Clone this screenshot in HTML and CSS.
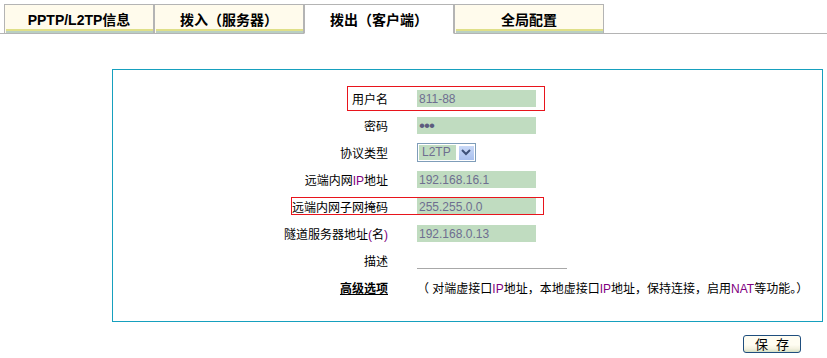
FILE: index.html
```html
<!DOCTYPE html>
<html lang="zh-CN">
<head>
    <meta charset="UTF-8">
    <meta name="viewport" content="width=device-width, initial-scale=1.0">
    <title>拨出（客户端）</title>
    <link rel="stylesheet" href="styles.css">
</head>
<body>

    <div class="tabs">
        <a class="tab">PPTP/L2TP信息</a>
        <a class="tab">拨入（服务器）</a>
        <a class="tab active">拨出（客户端）</a>
        <a class="tab">全局配置</a>
    </div>

    <div class="content">
        <form class="panel" onsubmit="return false">
            <div class="row">
                <label class="label" for="user">用户名</label>
                <input class="field" type="text" id="user" value="811-88">
                <span class="mark mark-user"></span>
            </div>
            <div class="row">
                <label class="label" for="pass">密码</label>
                <input class="field field-pass" type="password" id="pass" value="abc">
            </div>
            <div class="row">
                <span class="label">协议类型</span>
                <div class="select">
                    <span class="select-value">L2TP</span>
                    <span class="select-btn">
                        <svg width="16" height="15" viewBox="0 0 16 15">
                            <polyline points="4,5 8,9 12,5" fill="none" stroke="#3d5178" stroke-width="2"/>
                        </svg>
                    </span>
                </div>
            </div>
            <div class="row">
                <label class="label" for="remote-ip">远端内网<span class="en">IP</span>地址</label>
                <input class="field" type="text" id="remote-ip" value="192.168.16.1">
            </div>
            <div class="row">
                <label class="label" for="remote-mask">远端内网子网掩码</label>
                <input class="field" type="text" id="remote-mask" value="255.255.0.0">
                <span class="mark mark-mask"></span>
            </div>
            <div class="row">
                <label class="label" for="server">隧道服务器地址<span class="en">(</span>名<span class="en">)</span></label>
                <input class="field" type="text" id="server" value="192.168.0.13">
            </div>
            <div class="row">
                <label class="label" for="desc">描述</label>
                <input class="field field-line" type="text" id="desc">
            </div>
            <div class="row">
                <a class="label adv-label">高级选项</a>
                <span class="adv-note">（ 对端虚接口<span class="en">IP</span>地址，本地虚接口<span class="en">IP</span>地址，保持连接，启用<span class="en">NAT</span>等功能。）</span>
            </div>
        </form>

        <div class="actions">
            <button class="save" type="button">保 存</button>
        </div>
    </div>

</body>
</html>
```

FILE: styles.css
```css
body {
    margin: 0;
    font-family: "Liberation Sans", "Noto Sans CJK SC", sans-serif;
    font-size: 12px;
    color: #000;
    background-color: #fff;
}

/* tab strip */
.tabs {
    display: flex;
    padding: 4px 0 0 4px;
    border-bottom: 1px solid #b4b4b4;
}

.tab {
    box-sizing: border-box;
    width: 150px;
    height: 30px;
    margin-bottom: -1px;
    padding-top: 6px;
    border: 1px solid #b4b4b4;
    background-color: #fffbec;
    box-shadow: inset 1px 0 0 #fffbec, inset 0 -2px 0 #b9cfc2, inset 0 -4px 0 #dfdf88;
    font-size: 14px;
    font-weight: bold;
    line-height: 18px;
    text-align: center;
    cursor: pointer;
}

.tab.active {
    background-color: #fff;
    border-bottom-color: #fff;
    box-shadow: none;
}

/* form panel */
.content {
    width: 711px;
    margin: 35px 0 0 112px;
}

.panel {
    border: 1px solid #16a0be;
    padding: 15px 0 20px;
}

.row {
    position: relative;
    display: grid;
    grid-template-columns: 275px auto;
    column-gap: 29px;
    align-items: center;
    justify-items: start;
    height: 27px;
}

.label {
    justify-self: end;
    white-space: nowrap;
}

.en {
    color: #800080;
}

.field {
    box-sizing: border-box;
    width: 119px;
    height: 17px;
    padding: 0 2px;
    border: none;
    background-color: #c0dcc0;
    font-family: "Liberation Sans", sans-serif;
    font-size: 12px;
    color: #6e6e90;
    outline: none;
}

.field-pass {
    font-size: 17px;
    letter-spacing: -1px;
    color: #5c5c7e;
}

.field-line {
    width: 150px;
    background-color: transparent;
    border-bottom: 1px solid #a8a8a8;
}

.select {
    box-sizing: border-box;
    display: flex;
    gap: 2px;
    width: 59px;
    height: 19px;
    padding: 1px;
    border: 1px solid #7f9db9;
}

.select-value {
    width: 37px;
    padding-left: 3px;
    box-sizing: border-box;
    background-color: #c0dcc0;
    color: #6e6e90;
    line-height: 15px;
}

.select-btn {
    display: flex;
    width: 16px;
    background: linear-gradient(#cbdaf7, #a9c0ee);
    box-shadow: inset 1px 1px 0 #fff;
}

/* red highlight boxes */
.mark {
    position: absolute;
    border: 1px solid #e8141c;
    box-sizing: border-box;
}

.mark-user {
    left: 234px;
    top: 1px;
    width: 198px;
    height: 25px;
}

.mark-mask {
    left: 178px;
    top: 4px;
    width: 253px;
    height: 18px;
}

.adv-label {
    font-weight: bold;
    text-decoration: underline;
    cursor: pointer;
}

.adv-note {
    white-space: nowrap;
}

/* save button */
.actions {
    display: flex;
    justify-content: flex-end;
    padding: 13px 22px 0 0;
}

.save {
    width: 58px;
    height: 18px;
    padding: 0;
    border: 1px solid #1f4e7e;
    border-radius: 3px;
    background: linear-gradient(#fffdf2 55%, #f3f1df 80%, #d5dfc4);
    font-family: "Noto Sans CJK SC", sans-serif;
    font-size: 13px;
    line-height: 16px;
    word-spacing: 5px;
    color: #000;
    cursor: pointer;
}
```
